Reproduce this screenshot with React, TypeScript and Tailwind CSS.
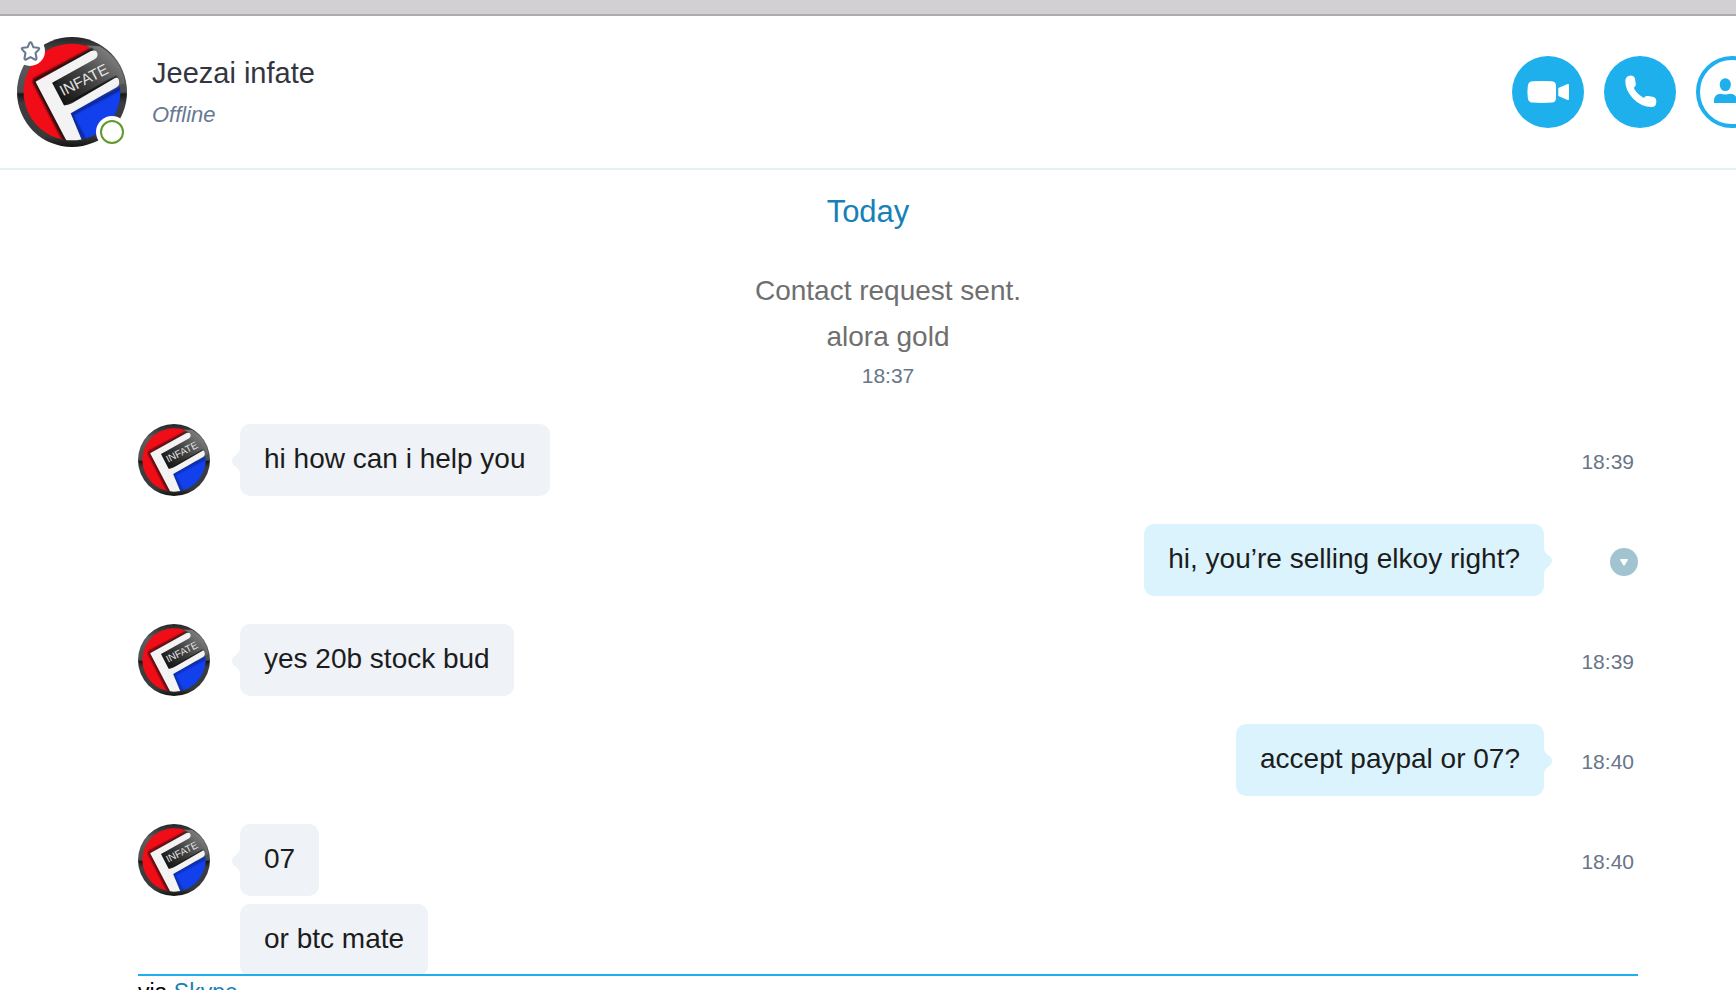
import React from 'react';

interface Message {
  id: number;
  own: boolean;
  lines: string[];
  time?: string;
}

const messages: Message[] = [
  { id: 1, own: false, lines: ['hi how can i help you'], time: '18:39' },
  { id: 2, own: true, lines: ['hi, you’re selling elkoy right?'] },
  { id: 3, own: false, lines: ['yes 20b stock bud'], time: '18:39' },
  { id: 4, own: true, lines: ['accept paypal or 07?'], time: '18:40' },
  { id: 5, own: false, lines: ['07', 'or btc mate'], time: '18:40' }
];

function Avatar({ id, className }: { id: string; className: string }) {
  return (
    <svg viewBox="50 50 332 332" className={className} role="img" aria-label="Jeezai infate">
      <defs>
        <linearGradient id={`${id}-ring`} x1="0" y1="0" x2="0" y2="1">
          <stop offset="0" stopColor="#232426" />
          <stop offset="0.2" stopColor="#5c5d5f" />
          <stop offset="0.5" stopColor="#4c4d4f" />
          <stop offset="0.52" stopColor="#161617" />
          <stop offset="0.6" stopColor="#3c3d3f" />
          <stop offset="0.9" stopColor="#38393a" />
          <stop offset="1" stopColor="#111112" />
        </linearGradient>
        <linearGradient id={`${id}-panel`} x1="190" y1="250" x2="330" y2="90" gradientUnits="userSpaceOnUse">
          <stop offset="0" stopColor="#141414" />
          <stop offset="0.5" stopColor="#434343" />
          <stop offset="1" stopColor="#808080" />
        </linearGradient>
        <clipPath id={`${id}-inner`}>
          <circle cx="216" cy="216" r="146" />
        </clipPath>
        <filter id={`${id}-soft`} x="-10%" y="-10%" width="120%" height="120%">
          <feGaussianBlur stdDeviation="4" />
        </filter>
      </defs>
      <circle cx="216" cy="216" r="166" fill={`url(#${id}-ring)`} />
      <path d="M262 76L300 78A162 162 0 0 1 376 190L356 196L180 255L150 185Z" fill={`url(#${id}-panel)`} />
      <g clipPath={`url(#${id}-inner)`}>
        <path d="M50 50H262L268 90L112 184L206 382H50Z" fill="#f00d17" />
        <path d="M206 280L372 194V382H258Z" fill="#1240ec" />
        <path
          d="M101 181L280 86M101 181L198 370M160 184L190 254L352 172"
          fill="none"
          stroke="#0c0c0c"
          strokeWidth="10"
          filter={`url(#${id}-soft)`}
        />
        <path
          d="M214 284L362 206M214 284L254 360"
          fill="none"
          stroke="#0a1a60"
          strokeWidth="6"
          filter={`url(#${id}-soft)`}
        />
        <path
          d="M106 185L272 93Q290 86 293 101Q294 112 284 117L156 188L192 257Q204 255 216 250L346 174Q357 169 359 184Q359 198 348 203L212 280L250 372H204Z"
          fill="#f3f3f3"
        />
      </g>
      <path d="M161 194L288 126L352 130L350 164L214 242L194 252Z" fill={`url(#${id}-panel)`} />
      <text
        x="189"
        y="229"
        transform="rotate(-27 189 229)"
        fill="#e2e2e2"
        fontSize="46"
        fontFamily="Liberation Sans, Arial, sans-serif"
      >
        INFATE
      </text>
    </svg>
  );
}

function Bubble({ text, own, tail }: { text: string; own: boolean; tail: boolean }) {
  return (
    <p
      className={`relative w-fit rounded-[10px] px-6 pt-[17px] pb-[19px] text-[28px] leading-9 text-[#1c1c1c] ${
        own ? 'bg-[#daf3fc]' : 'bg-[#eff2f7]'
      }`}
    >
      {text}
      {tail && (
        <svg
          viewBox="0 0 8 28"
          className={`absolute top-[23px] h-7 w-2 ${own ? 'left-full fill-[#daf3fc]' : 'right-full -scale-x-100 fill-[#eff2f7]'}`}
          aria-hidden="true"
        >
          <path d="M0 0C0 5 2 6.500 6 9.500Q8 11.500 8 14T6 18.500C2 21.500 0 23 0 28Z" />
        </svg>
      )}
    </p>
  );
}

function MessageRow({ message }: { message: Message }) {
  const { own, lines, time } = message;
  return (
    <li className="flex items-start">
      {!own && <Avatar id={`avatar-${message.id}`} className="mr-[30px] size-[72px] shrink-0" />}
      <div className={`flex flex-1 flex-col gap-2 ${own ? 'items-end' : 'items-start'}`}>
        {lines.map((line, index) => (
          <Bubble key={line} text={line} own={own} tail={index === 0} />
        ))}
      </div>
      <div className="flex h-[76px] w-[94px] shrink-0 items-center justify-end">
        {time ? (
          <time className="pr-1 text-[21px] text-[#697588]">{time}</time>
        ) : (
          <button type="button" aria-label="Message options" className="flex size-7 items-center justify-center rounded-full bg-[#a2c4d0]">
            <svg viewBox="0 0 8 7" className="h-[7px] w-2 fill-white" aria-hidden="true">
              <path d="M1 0H7Q8.500 0 7.600 1.400L4.800 6Q4 7.300 3.200 6L.4 1.400Q-.5 0 1 0Z" />
            </svg>
          </button>
        )}
      </div>
    </li>
  );
}

export default function App() {
  return (
    <div className="flex h-screen flex-col overflow-hidden bg-white font-['Liberation_Sans',Arial,sans-serif]">
      {/* Window title bar */}
      <div className="h-4 shrink-0 border-b-2 border-[#aeabae] bg-[#d2d0d3]" />

      {/* Contact header */}
      <header className="flex h-[154px] shrink-0 items-center border-b-2 border-[#e4f1f4] pl-4">
        <div className="relative flex size-28 shrink-0 items-center justify-center">
          <Avatar id="avatar-header" className="size-[110px]" />
          <button
            type="button"
            aria-label="Add to favorites"
            className="absolute top-0 -left-px flex size-[30px] items-center justify-center rounded-full bg-white"
          >
            <svg viewBox="0 0 20 20" className="size-[21px] fill-none stroke-[#687992] stroke-2" aria-hidden="true">
              <path
                strokeLinejoin="round"
                d="M9 2Q10 .4 11 2L12.700 5.900L17.200 6.400Q19 6.800 17.800 8.200L14.800 11.400L15.700 16.300Q15.800 18.200 14.200 17.600L10 15.400L5.800 17.600Q4.200 18.200 4.300 16.300L5.200 11.400L2.200 8.200Q1 6.800 2.800 6.400L7.300 5.900Z"
              />
            </svg>
          </button>
          <span className="absolute right-0 bottom-0 flex size-8 items-center justify-center rounded-full bg-white">
            <span className="size-6 rounded-full border-2 border-[#5f9a2c]" />
          </span>
        </div>
        <div className="ml-6 flex-1">
          <h1 className="text-[29px] leading-9 text-[#33353f]">Jeezai infate</h1>
          <p className="mt-2.5 text-[22px] leading-7 text-[#687992] italic">Offline</p>
        </div>
        <div className="-mr-8 flex shrink-0 gap-5">
          <button type="button" aria-label="Video call" className="size-[72px] rounded-full bg-[#1eafed]">
            <svg viewBox="0 0 72 72" className="size-full fill-white" aria-hidden="true">
              <path d="M20 25.300Q30 24.700 40 25.300Q44 25.600 44 30V42Q44 46.200 40 46.600Q30 47.200 20 46.600Q16.500 46.400 15.800 42Q15 36 15.800 30Q16.500 25.600 20 25.300Z" />
              <path d="M46.300 32L55 28.200Q57 27.500 57 29V43Q57 44.500 55 43.800L46.300 40Z" />
            </svg>
          </button>
          <button type="button" aria-label="Call" className="size-[72px] rounded-full bg-[#1eafed]">
            <svg viewBox="0 0 72 72" className="size-full fill-white" aria-hidden="true">
              <path d="M21.300 24.500Q21.800 19.800 26.500 19.500Q30.500 19.500 31 23L31.800 28Q32 31 29.800 31.800Q31.500 37 39.800 42Q41 39.500 44 40L48.500 40.700Q52.300 41.500 52.300 45V46.500Q52 51 47.500 51Q37 51 29 42.500Q21 34 21.300 24.500Z" />
            </svg>
          </button>
          <button type="button" aria-label="Add people" className="size-[72px] rounded-full border-4 border-[#1eafed]">
            <svg viewBox="4 4 64 64" className="size-full fill-[#1eafed]" aria-hidden="true">
              <ellipse cx="29.300" cy="28.600" rx="5.600" ry="6.400" />
              <path d="M18 47V44Q18.500 38 24.500 37.700Q29.300 39.300 34 37.700Q40.500 38 41 44V47Z" />
              <path d="M47 29H50V34H55V37H50V42H47V37H42V34H47Z" />
            </svg>
          </button>
        </div>
      </header>

      {/* Conversation */}
      <main className="min-h-0 flex-1 overflow-hidden">
        <h2 className="pt-6 text-center text-[31px] leading-9 text-[#1680b8]">Today</h2>
        <div className="mt-[38px] mr-[98px] ml-[138px]">
          <div className="text-center text-[28px] leading-[46px] text-[#6f6f6f]">
            <p>Contact request sent.</p>
            <p>alora gold</p>
            <p className="text-[21px] leading-8 text-[#697588]">18:37</p>
          </div>
          <ul className="mt-8 space-y-6">
            {messages.map((message) => (
              <MessageRow key={message.id} message={message} />
            ))}
          </ul>
        </div>
      </main>

      {/* Composer edge */}
      <footer className="mr-[98px] ml-[138px] h-4 shrink-0 overflow-hidden border-t-2 border-[#1eafed] pt-1">
        <p className="text-[23px] leading-6 text-black">
          via <a href="#skype" className="text-[#1680b8]">Skype</a>
        </p>
      </footer>
    </div>
  );
}
